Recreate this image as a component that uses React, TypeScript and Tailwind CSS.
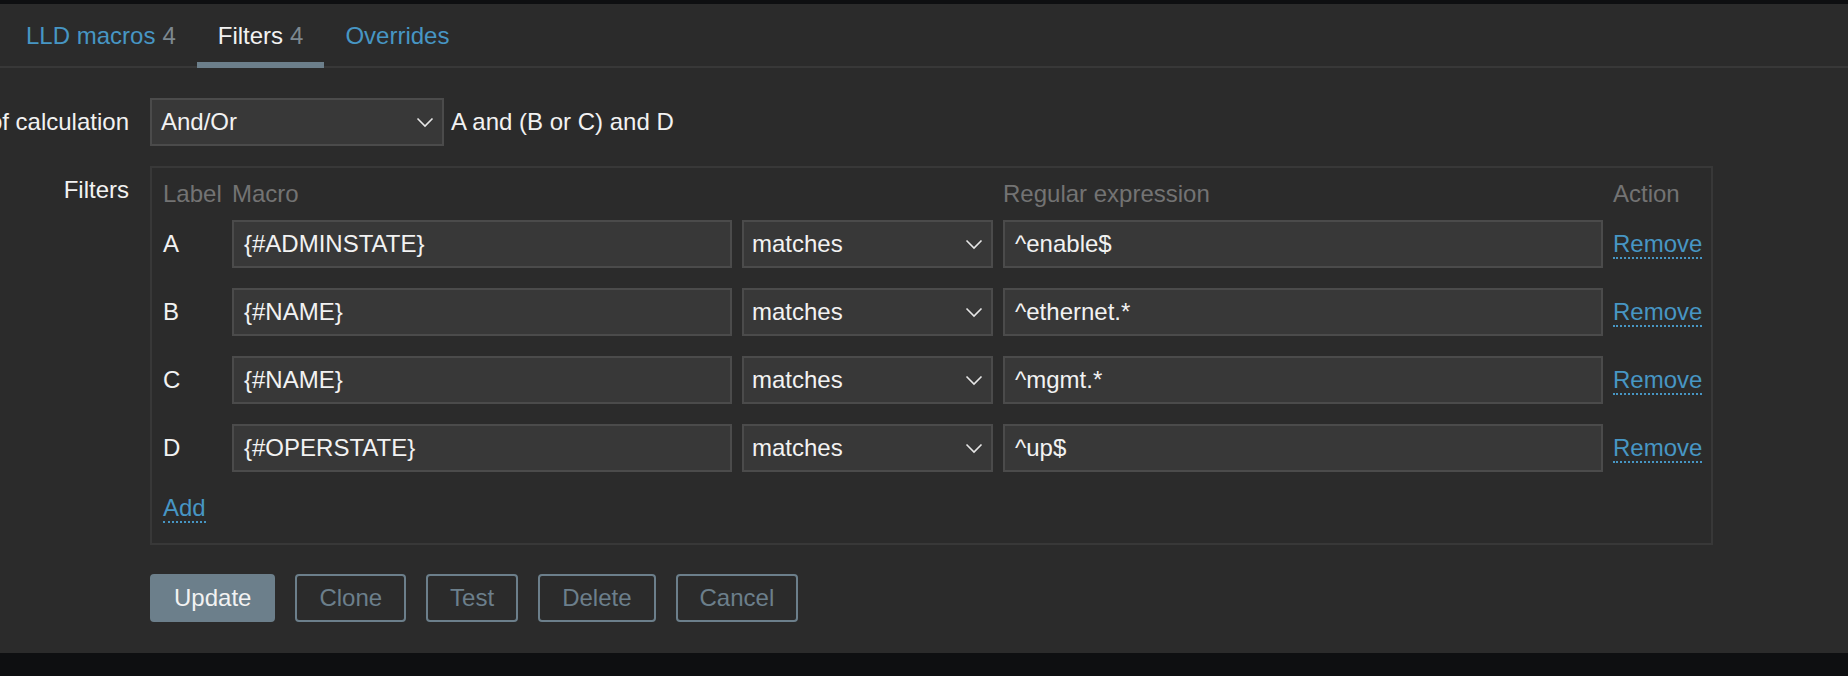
import React from "react";

const rows = [
    { label: "A", macro: "{#ADMINSTATE}", value: "^enable$" },
    { label: "B", macro: "{#NAME}", value: "^ethernet.*" },
    { label: "C", macro: "{#NAME}", value: "^mgmt.*" },
    { label: "D", macro: "{#OPERSTATE}", value: "^up$" },
];

function Chevron() {
    return (
        <svg width="18" height="11" viewBox="0 0 18 11" fill="none" className="shrink-0">
            <polyline points="1.5,1.5 9,9 16.5,1.5" stroke="#e6e6e6" strokeWidth="1.6" />
        </svg>
    );
}

function Select({ value, className = "" }: { value: string; className?: string }) {
    return (
        <div className={`flex h-[48px] items-center justify-between border-2 border-[#4b4b4b] bg-[#383838] pl-[8px] pr-[8px] ${className}`}>
            <span>{value}</span>
            <Chevron />
        </div>
    );
}

function Link({ children }: { children: React.ReactNode }) {
    return <span className="border-b-2 border-dotted border-[#4796c4] text-[#4796c4]">{children}</span>;
}

function Tab({ label, count, active }: { label: string; count?: number; active?: boolean }) {
    return (
        <div
            className={`flex h-[64px] items-center border-b-[6px] px-[21px] pt-[5px] ${
                active ? "border-[#6c7f8b] text-[#f2f2f2]" : "border-transparent text-[#4796c4]"
            }`}
        >
            <span>{label}</span>
            {count !== undefined && <span className="ml-[7px] text-[#7d8890]">{count}</span>}
        </div>
    );
}

export default function App() {
    return (
        <div className="h-[676px] w-full overflow-hidden bg-[#0e0f11] font-['Liberation_Sans',Arial,sans-serif] text-[24px] text-[#f2f2f2]">
            <div className="h-[4px]" />
            <div className="h-[649px] bg-[#2b2b2b]">
                {/* tabs */}
                <div className="flex h-[64px] border-b-2 border-[#383838] pl-[5px]">
                    <Tab label="LLD macros" count={4} />
                    <Tab label="Filters" count={4} active />
                    <Tab label="Overrides" />
                </div>

                <div className="pt-[30px]">
                    {/* type of calculation */}
                    <div className="flex h-[48px] items-center">
                        <div className="flex w-[129px] shrink-0 justify-end">
                            <span className="whitespace-nowrap">Type of calculation</span>
                        </div>
                        <Select value="And/Or" className="ml-[21px] w-[294px] pl-[9px] pr-[7px]" />
                        <span className="ml-[7px] whitespace-nowrap">A and (B or C) and D</span>
                    </div>

                    {/* filters */}
                    <div className="mt-[20px] flex items-start">
                        <div className="flex w-[129px] shrink-0 justify-end pt-[6px]">
                            <span>Filters</span>
                        </div>
                        <div className="ml-[21px] w-[1563px] border-2 border-[#383838] pb-[21px] pl-[11px] pr-[9px] pt-[12px]">
                            <div className="grid grid-cols-[59px_500px_251px_600px_1fr] gap-x-[10px] leading-[28px] text-[#737373]">
                                <span>Label</span>
                                <span>Macro</span>
                                <span />
                                <span>Regular expression</span>
                                <span>Action</span>
                            </div>
                            {rows.map((r, i) => (
                                <div
                                    key={r.label}
                                    className={`grid grid-cols-[59px_500px_251px_600px_1fr] items-center gap-x-[10px] ${
                                        i === 0 ? "mt-[12px]" : "mt-[20px]"
                                    }`}
                                >
                                    <span>{r.label}</span>
                                    <div className="flex h-[48px] items-center border-2 border-[#4b4b4b] bg-[#383838] px-[10px]">
                                        {r.macro}
                                    </div>
                                    <Select value="matches" />
                                    <div className="flex h-[48px] items-center border-2 border-[#4b4b4b] bg-[#383838] px-[10px]">
                                        {r.value}
                                    </div>
                                    <div>
                                        <Link>Remove</Link>
                                    </div>
                                </div>
                            ))}
                            <div className="mt-[22px] leading-[28px]">
                                <Link>Add</Link>
                            </div>
                        </div>
                    </div>

                    {/* buttons */}
                    <div className="ml-[150px] mt-[29px] flex gap-[20px]">
                        <button className="h-[48px] rounded-[4px] border-2 border-[#6c7f8b] bg-[#6c7f8b] px-[22px] text-[#f2f2f2]">
                            Update
                        </button>
                        {["Clone", "Test", "Delete", "Cancel"].map((b) => (
                            <button
                                key={b}
                                className="h-[48px] rounded-[4px] border-2 border-[#6c7f8b] px-[22px] text-[#6c7f8b]"
                            >
                                {b}
                            </button>
                        ))}
                    </div>
                </div>
            </div>
        </div>
    );
}
